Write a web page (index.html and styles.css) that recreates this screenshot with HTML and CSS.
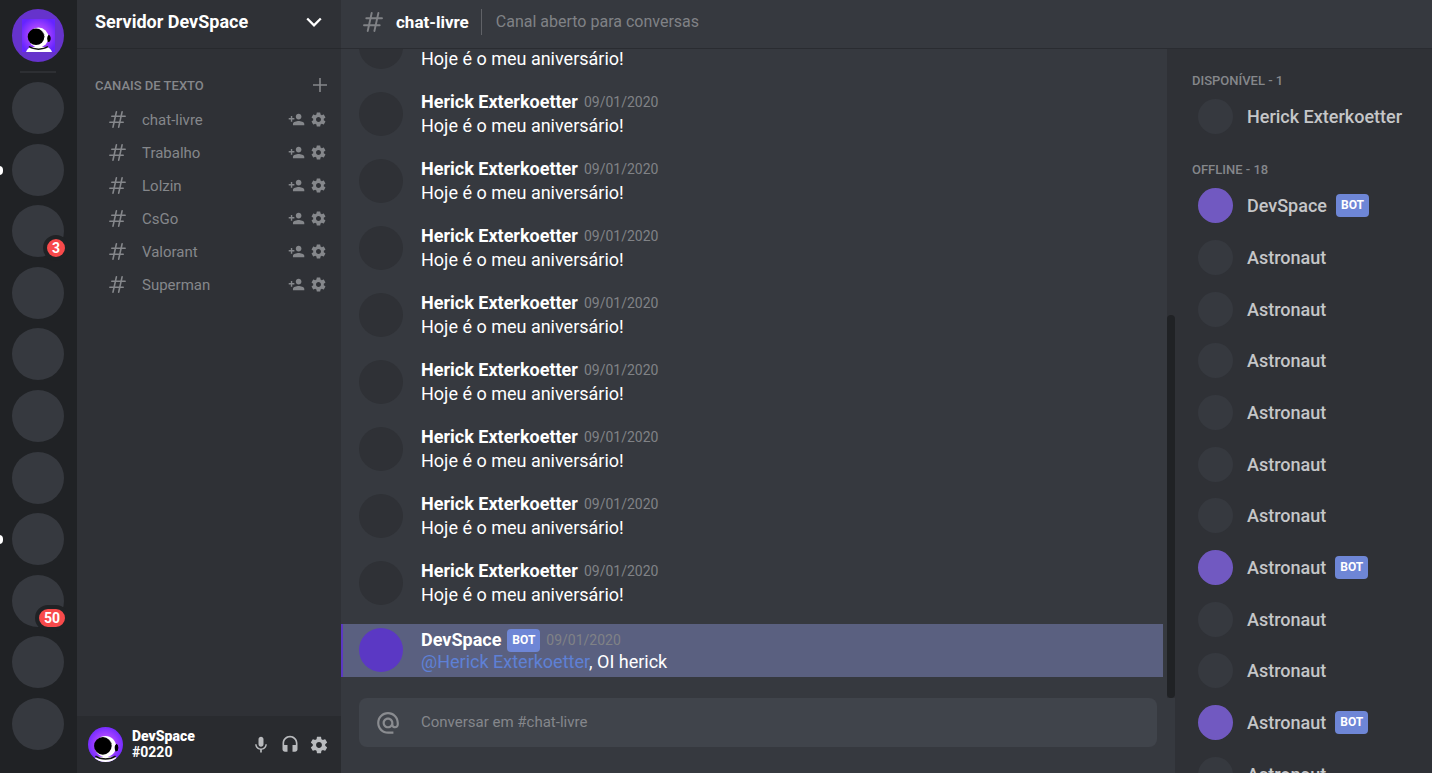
FILE: index.html
```html
<!DOCTYPE html>
<html lang="pt-BR">
<head>
<meta charset="utf-8">
<title>Servidor DevSpace</title>
<link rel="stylesheet" href="styles.css">
</head>
<body>
<svg class="sprite" aria-hidden="true">
  <defs>
    <radialGradient id="glow" cx="50%" cy="50%" r="58%">
      <stop offset="0.45" stop-color="#a844ff"/>
      <stop offset="1" stop-color="#6524ff"/>
    </radialGradient>
  </defs>
  <symbol id="hash" viewBox="0 0 20 20"><path d="M8.700 1 4.700 19M15.400 1 11.400 19M3.300 6.200h15.700M1 13.200h15.700" fill="none" stroke="currentColor" stroke-width="1.900" stroke-linecap="round"/></symbol>
  <symbol id="plus" viewBox="0 0 14 14"><path d="M7 0v14M0 7h14" fill="none" stroke="currentColor" stroke-width="1.600"/></symbol>
  <symbol id="chevron" viewBox="0 0 16 10"><path d="m1.200 1.500 6.800 6.800 6.800-6.800" fill="none" stroke="currentColor" stroke-width="2.300"/></symbol>
  <symbol id="invite" viewBox="0 0 24 24"><path d="M15 12c2.210 0 4-1.790 4-4s-1.790-4-4-4-4 1.790-4 4 1.790 4 4 4zm-9-2V7H4v3H1v2h3v3h2v-3h3v-2H6zm9 4c-2.670 0-8 1.340-8 4v2h16v-2c0-2.660-5.330-4-8-4z" fill="currentColor"/></symbol>
  <symbol id="gear" viewBox="0 0 24 24"><path d="M19.430 12.980c.04-.32.07-.64.07-.98s-.03-.66-.07-.98l2.110-1.650c.19-.15.24-.42.12-.64l-2-3.460c-.12-.22-.39-.3-.61-.22l-2.490 1c-.52-.4-1.080-.73-1.690-.98l-.38-2.650C14.460 2.180 14.250 2 14 2h-4c-.25 0-.46.18-.49.42l-.38 2.650c-.61.25-1.170.59-1.690.98l-2.490-1c-.23-.09-.49 0-.61.22l-2 3.460c-.13.22-.07.49.12.64l2.110 1.650c-.04.32-.07.65-.07.98s.03.66.07.98l-2.110 1.650c-.19.15-.24.42-.12.64l2 3.460c.12.22.39.3.61.22l2.490-1c.52.4 1.080.73 1.690.98l.38 2.650c.03.24.24.42.49.42h4c.25 0 .46-.18.49-.42l.38-2.650c.61-.25 1.170-.59 1.690-.98l2.490 1c.23.09.49 0 .61-.22l2-3.460c.12-.22.07-.49-.12-.64l-2.110-1.650zM12 15.500c-1.930 0-3.500-1.570-3.500-3.500s1.570-3.500 3.500-3.500 3.500 1.570 3.500 3.500-1.570 3.500-3.500 3.500z" fill="currentColor"/></symbol>
  <symbol id="mic" viewBox="0 0 24 24"><path d="M12 14c1.660 0 2.990-1.340 2.990-3L15 5c0-1.660-1.340-3-3-3S9 3.340 9 5v6c0 1.660 1.340 3 3 3zm5.300-3c0 3-2.540 5.100-5.300 5.100S6.700 14 6.700 11H5c0 3.410 2.720 6.230 6 6.720V21h2v-3.280c3.280-.48 6-3.300 6-6.720h-1.700z" fill="currentColor"/></symbol>
  <symbol id="headset" viewBox="0 0 24 24"><path d="M12 1c-4.970 0-9 4.030-9 9v7c0 1.660 1.340 3 3 3h3v-8H5v-2c0-3.870 3.130-7 7-7s7 3.130 7 7v2h-4v8h3c1.660 0 3-1.340 3-3v-7c0-4.970-4.030-9-9-9z" fill="currentColor"/></symbol>
  <symbol id="at" viewBox="0 0 24 24"><path d="M12 1.950c-5.520 0-10 4.480-10 10s4.480 10 10 10h5v-2h-5c-4.340 0-8-3.660-8-8s3.660-8 8-8 8 3.660 8 8v1.430c0 .79-.71 1.570-1.500 1.570s-1.500-.78-1.500-1.570v-1.430c0-2.760-2.240-5-5-5s-5 2.240-5 5 2.240 5 5 5c1.380 0 2.640-.56 3.540-1.470.65.89 1.770 1.470 2.960 1.470 1.970 0 3.500-1.600 3.500-3.570v-1.430c0-5.520-4.480-10-10-10zm0 13c-1.660 0-3-1.340-3-3s1.340-3 3-3 3 1.340 3 3-1.340 3-3 3z" fill="currentColor"/></symbol>
  <symbol id="astronaut" viewBox="0 0 33 33">
    <path d="M0 0h33v33H0z" fill="url(#glow)"/>
    <path d="M4 33c1-3 3-5 6-5h14c3 0 5 2 6 5z" fill="#fff"/>
    <ellipse cx="26.300" cy="19.500" rx="2.200" ry="3.400" fill="#000"/>
    <circle cx="16.500" cy="18.500" r="10" fill="#fff"/>
    <path d="M7 27.500c5 3.500 14 3.500 19 0" fill="none" stroke="#111" stroke-width="1.500"/>
    <ellipse cx="26.800" cy="19.500" rx="1.600" ry="3" fill="#000"/>
    <circle cx="14" cy="17.800" r="8.300" fill="#000"/>
    <path d="M20 12.500c2 2 2.500 4 2.200 6" fill="none" stroke="#555" stroke-width=".7" stroke-dasharray="1.500 1"/>
  </symbol>
</svg>
<div class="app">
  <nav class="servers" aria-label="Servidores">
    <button class="server home" aria-label="Início"><svg class="home-logo"><use href="#astronaut"/></svg></button>
    <div class="divider"></div>
    <div class="server-list" id="servers"></div>
  </nav>

  <div class="channels">
    <button class="server-name"><span>Servidor DevSpace</span><svg class="chevron"><use href="#chevron"/></svg></button>
    <div class="channel-area">
      <div class="category"><span>CANAIS DE TEXTO</span><button class="icon-button" aria-label="Criar canal"><svg class="plus"><use href="#plus"/></svg></button></div>
      <ul class="channel-list" id="channels"></ul>
    </div>
    <footer class="user">
      <svg class="user-avatar"><use href="#astronaut"/></svg>
      <div class="user-data"><strong>DevSpace</strong><span>#0220</span></div>
      <div class="user-tools">
        <button class="icon-button" aria-label="Microfone"><svg class="tool"><use href="#mic"/></svg></button>
        <button class="icon-button" aria-label="Áudio"><svg class="tool"><use href="#headset"/></svg></button>
        <button class="icon-button" aria-label="Configurações"><svg class="tool"><use href="#gear"/></svg></button>
      </div>
    </footer>
  </div>

  <div class="workspace">
    <header class="topbar">
      <svg class="hash"><use href="#hash"/></svg>
      <h1>chat-livre</h1>
      <p>Canal aberto para conversas</p>
    </header>
    <div class="content">
      <main class="chat">
        <div class="scroll">
          <div class="messages" id="messages"></div>
          <div class="track"><div class="thumb"></div></div>
        </div>
        <div class="composer">
          <label for="composer" aria-label="Mensagem"><svg class="at"><use href="#at"/></svg></label>
          <input id="composer" type="text" placeholder="Conversar em #chat-livre">
        </div>
      </main>
      <aside class="members">
        <h2>DISPONÍVEL - 1</h2>
        <ul class="online"><li class="member"><span class="avatar"></span><strong>Herick Exterkoetter</strong></li></ul>
        <h2>OFFLINE - 18</h2>
        <ul class="offline" id="offline"></ul>
      </aside>
    </div>
  </div>
</div>
<script src="app.js"></script>
</body>
</html>
```

FILE: styles.css
```css
* { box-sizing: border-box; margin: 0; padding: 0; }
body, button, input { font-family: Roboto, "Liberation Sans", sans-serif; }
body { background: #36393f; color: #fff; }
button { border: 0; background: none; color: inherit; cursor: pointer; }
ul { list-style: none; }
svg { display: block; flex: none; }
.sprite { position: absolute; width: 0; height: 0; }

.app { display: flex; height: 100vh; overflow: hidden; }

/* servers */
.servers { width: 77px; flex: none; display: flex; flex-direction: column; align-items: center; padding: 9px 1px 23px 0; background: #202225; }
.server { position: relative; width: 52px; height: 52px; flex: none; border-radius: 50%; background: #36393f; }
.home { display: flex; align-items: center; justify-content: center; height: 53px; background: #6633cc; }
.home-logo { width: 33px; height: 33px; }
.divider { width: 36px; height: 2px; flex: none; margin: 9px 0; background: #2d2f33; }
.server-list { flex: 1; display: flex; flex-direction: column; justify-content: space-between; gap: 8px; width: 100%; align-items: center; }
.unread::before { content: ""; position: absolute; left: -17px; top: 22px; width: 8px; height: 9px; border-radius: 4px; background: #fff; }
.count { position: absolute; right: -5px; bottom: -4px; height: 26px; padding: 0 5px; border: 4px solid #202225; border-radius: 14px; background: #f84a4b; color: #fff; font-size: 14px; font-weight: 700; line-height: 18px; }

/* channels */
.channels { width: 264px; flex: none; display: flex; flex-direction: column; background: #2f3136; }
.server-name { display: flex; align-items: center; justify-content: space-between; height: 49px; padding: 0 19px 5px 18px; border-bottom: 1px solid #27292d; font-size: 18px; font-weight: 700; }
.chevron { width: 16px; height: 10px; }
.channel-area { flex: 1; padding: 25px 14px 0 18px; color: #85878b; }
.category { display: flex; align-items: center; justify-content: space-between; height: 22px; font-size: 13px; font-weight: 500; }
.plus { width: 14px; height: 14px; }
.channel-list { padding: 7px 0 0 14px; }
.channel { display: flex; align-items: center; height: 33px; font-size: 15px; }
.channel .hash { width: 17px; height: 17px; margin-right: 16px; }
.channel a { flex: 1; color: inherit; text-decoration: none; }
.channel .icon-button { margin-left: 5px; }
.channel .icon-button svg { width: 17px; height: 17px; }
.user { display: flex; align-items: center; height: 57px; padding: 0 12px 0 11px; background: #292b2f; }
.user-avatar { width: 35px; height: 35px; border-radius: 50%; }
.user-data { display: grid; margin-left: 9px; padding-bottom: 2px; flex: 1; font-size: 14px; font-weight: 700; line-height: 16px; }
.user-tools { display: flex; gap: 9px; color: #b9bbbe; }
.tool { width: 20px; height: 20px; }

/* workspace */
.workspace { flex: 1; min-width: 0; display: flex; flex-direction: column; }
.topbar { position: relative; display: flex; align-items: center; height: 49px; flex: none; padding: 0 22px 4px; border-bottom: 1px solid #2a2c31; background: #36393f; }
.topbar .hash { width: 20px; height: 20px; color: #808286; }
.topbar h1 { margin-left: 13px; font-size: 17px; font-weight: 700; }
.topbar p { margin-left: 12px; padding-left: 14px; border-left: 1px solid #606267; color: #808286; font-size: 16px; line-height: 26px; }
.content { flex: 1; min-height: 0; display: flex; }
.chat { flex: 1; min-width: 0; display: flex; flex-direction: column; }
.scroll { flex: 1; min-height: 0; display: flex; }
.messages { flex: 1; display: flex; flex-direction: column; justify-content: flex-end; gap: 15px; padding: 0 4px 21px 0; overflow: hidden; }
.track { width: 8px; display: flex; align-items: flex-end; background: #2f3136; }
.thumb { width: 100%; height: 59%; border-radius: 4px; background: #202225; }
.message { display: flex; align-items: center; flex: none; padding: 2px 18px; font-size: 18px; line-height: 24px; }
.message .avatar { width: 44px; height: 44px; flex: none; margin-right: 18px; border-radius: 50%; background: #2f3136; }
.message header { display: flex; align-items: center; gap: 6px; height: 24px; }
.message header strong { font-weight: 700; }
.message time { color: #808286; font-size: 14px; }
.badge { padding: 0 5px; border-radius: 4px; background: #6e86d6; color: #fff; font-size: 12px; font-weight: 700; line-height: 23px; }
.mention { padding: 4px 18px 5px 16px; border-left: 2px solid #5b38c4; background: #5a6080; line-height: 20px; }
.mention .avatar { background: #5b38c4; }
.mention a { color: #5e80d6; text-decoration: none; }
.composer { display: flex; align-items: center; margin: 0 18px 26px; height: 49px; padding: 0 16px; border-radius: 8px; background: #40444b; color: #8a8c90; }
.at { width: 26px; height: 26px; }
.composer input { flex: 1; margin-left: 20px; padding-bottom: 2px; border: 0; outline: 0; background: none; color: #fff; font-size: 15px; }
.composer input::placeholder { color: #85878b; opacity: 1; }

/* members */
.members { width: 257px; flex: none; padding: 22px 6px 0 17px; overflow: hidden; background: #2f3136; color: #c5c6c8; }
.members h2 { color: #85878b; font-size: 13px; font-weight: 500; line-height: 20px; }
.member { display: flex; align-items: center; padding-left: 6px; font-size: 18px; }
.member .avatar { width: 35px; height: 35px; flex: none; margin-right: 14px; border-radius: 50%; background: #36393f; }
.member strong { font-weight: 500; }
.member .bot { background: #7159c1; }
.member .badge { margin-left: 9px; }
.online { display: grid; grid-auto-rows: 50px; margin-bottom: 19px; }
.offline { display: grid; grid-auto-rows: 1fr; min-height: 930px; }
```

FILE: app.js
```js
const fill = (id, items) => { document.getElementById(id).innerHTML = items.join(""); };
const icon = name => `<svg class="${name}"><use href="#${name}"/></svg>`;

const servers = [{}, { unread: true }, { count: 3 }, {}, {}, {}, {}, { unread: true }, { count: 50 }, {}, {}];
fill("servers", servers.map((s, i) =>
  `<button class="server${s.unread ? " unread" : ""}" aria-label="Servidor ${i + 1}">${s.count ? `<span class="count">${s.count}</span>` : ""}</button>`));

fill("channels", ["chat-livre", "Trabalho", "Lolzin", "CsGo", "Valorant", "Superman"].map(name =>
  `<li class="channel">${icon("hash")}<a href="#">${name}</a>
   <button class="icon-button" aria-label="Convidar">${icon("invite")}</button>
   <button class="icon-button" aria-label="Configurar">${icon("gear")}</button></li>`));

const greeting = `<article class="message"><span class="avatar"></span><div>
  <header><strong>Herick Exterkoetter</strong><time>09/01/2020</time></header>
  <p>Hoje é o meu aniversário!</p></div></article>`;
const reply = `<article class="message mention"><span class="avatar"></span><div>
  <header><strong>DevSpace</strong><span class="badge">BOT</span><time>09/01/2020</time></header>
  <p><a href="#">@Herick Exterkoetter</a>, OI herick</p></div></article>`;
fill("messages", [...Array(9).fill(greeting), reply]);

const bots = new Set([0, 7, 10]);
fill("offline", Array.from({ length: 18 }, (_, i) =>
  `<li class="member"><span class="avatar${bots.has(i) ? " bot" : ""}"></span><strong>${i ? "Astronaut" : "DevSpace"}</strong>${bots.has(i) ? '<span class="badge">BOT</span>' : ""}</li>`));
```
